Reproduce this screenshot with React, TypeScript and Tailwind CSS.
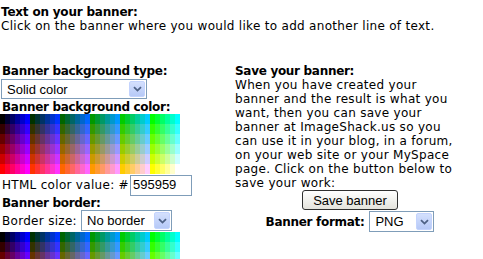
const STEPS = [0, 51, 102, 153, 204, 255];

function Palette() {
  const cells: string[] = [];
  for (const r of STEPS) {
    for (const g of STEPS) {
      for (const b of STEPS) cells.push(`rgb(${r},${g},${b})`);
    }
  }
  return (
    <div className="grid grid-cols-[repeat(36,5px)] auto-rows-[10px] w-[180px] shrink-0">
      {cells.map((c, i) => (
        <div key={i} style={{ background: c }} />
      ))}
    </div>
  );
}

function Chevron() {
  return (
    <svg width="9" height="6" viewBox="0 0 9 6" aria-hidden>
      <path d="M1 1.2 L4.5 4.6 L8 1.2" fill="none" stroke="#4d6185" strokeWidth="1.8" />
    </svg>
  );
}

function XpSelect({ value, width, height = 20 }: { value: string; width: number; height?: number }) {
  return (
    <div
      className="flex items-stretch border border-[#7f9db9] bg-white font-['Liberation_Sans',Arial,sans-serif] text-[13px] leading-none tracking-normal shrink-0"
      style={{ width, height }}
    >
      <span className="flex-1 flex items-center pl-[5px] whitespace-nowrap overflow-hidden">{value}</span>
      <span className="m-px w-[16px] flex items-center justify-center rounded-[2px] border border-[#c3d3fd] bg-gradient-to-b from-[#d4e0fd] to-[#b6c9f7]">
        <Chevron />
      </span>
    </div>
  );
}

export default function App() {
  return (
    <div className="w-[483px] h-[259px] overflow-hidden bg-white text-black font-['DejaVu_Sans',Verdana,sans-serif] text-[12px] leading-[14px] tracking-[0.3px]">
      <div className="pt-[5px] pl-px">
        <div className="font-bold tracking-[-0.2px]">Text on your banner:</div>
        <div className="whitespace-nowrap">Click on the banner where you would like to add another line of text.</div>
      </div>

      <div className="flex mt-[31px]">
        {/* left: banner settings */}
        <div className="w-[235px] shrink-0 flex flex-col pl-px">
          <div className="font-bold tracking-[-0.3px] pl-px">Banner background type:</div>
          <div className="mt-px">
            <XpSelect value="Solid color" width={146} />
          </div>
          <div className="font-bold tracking-[-0.3px] pl-px mt-px">Banner background color:</div>
          <div className="-ml-px">
            <Palette />
          </div>
          <div className="flex items-center h-[22px]">
            <span className="pl-px whitespace-nowrap">HTML color value: #</span>
            <span className="ml-px w-[62px] h-[21px] border border-[#7f9db9] flex items-center pl-[2px] font-['Liberation_Sans',Arial,sans-serif] text-[13px] tracking-normal">
              595959
            </span>
          </div>
          <div className="font-bold tracking-[-0.3px] pl-px">Banner border:</div>
          <div className="flex items-center">
            <span className="pl-px w-[80px] whitespace-nowrap">Border size:</span>
            <XpSelect value="No border" width={91} height={21} />
          </div>
          <div className="-ml-px mt-px">
            <Palette />
          </div>
        </div>

        {/* right: save */}
        <div className="w-[248px] shrink-0 flex flex-col">
          <div className="font-bold tracking-[-0.3px]">Save your banner:</div>
          <p className="whitespace-nowrap">
            When you have created your
            <br />
            banner and the result is what you
            <br />
            want, then you can save your
            <br />
            banner at ImageShack.us so you
            <br />
            can use it in your blog, in a forum,
            <br />
            on your web site or your MySpace
            <br />
            page. Click on the button below to
            <br />
            save your work:
          </p>
          <div className="w-[230px] flex flex-col items-center">
            <button
              type="button"
              className="w-[96px] h-[20px] rounded-[3px] border border-[#2f2f2f] bg-gradient-to-b from-white to-[#e4e3dc] font-['Liberation_Sans',Arial,sans-serif] text-[13px] leading-none tracking-normal"
            >
              Save banner
            </button>
            <div className="flex items-center mt-px gap-[5px]">
              <span className="font-bold tracking-[-0.3px]">Banner format:</span>
              <XpSelect value="PNG" width={65} height={21} />
            </div>
          </div>
        </div>
      </div>
    </div>
  );
}
